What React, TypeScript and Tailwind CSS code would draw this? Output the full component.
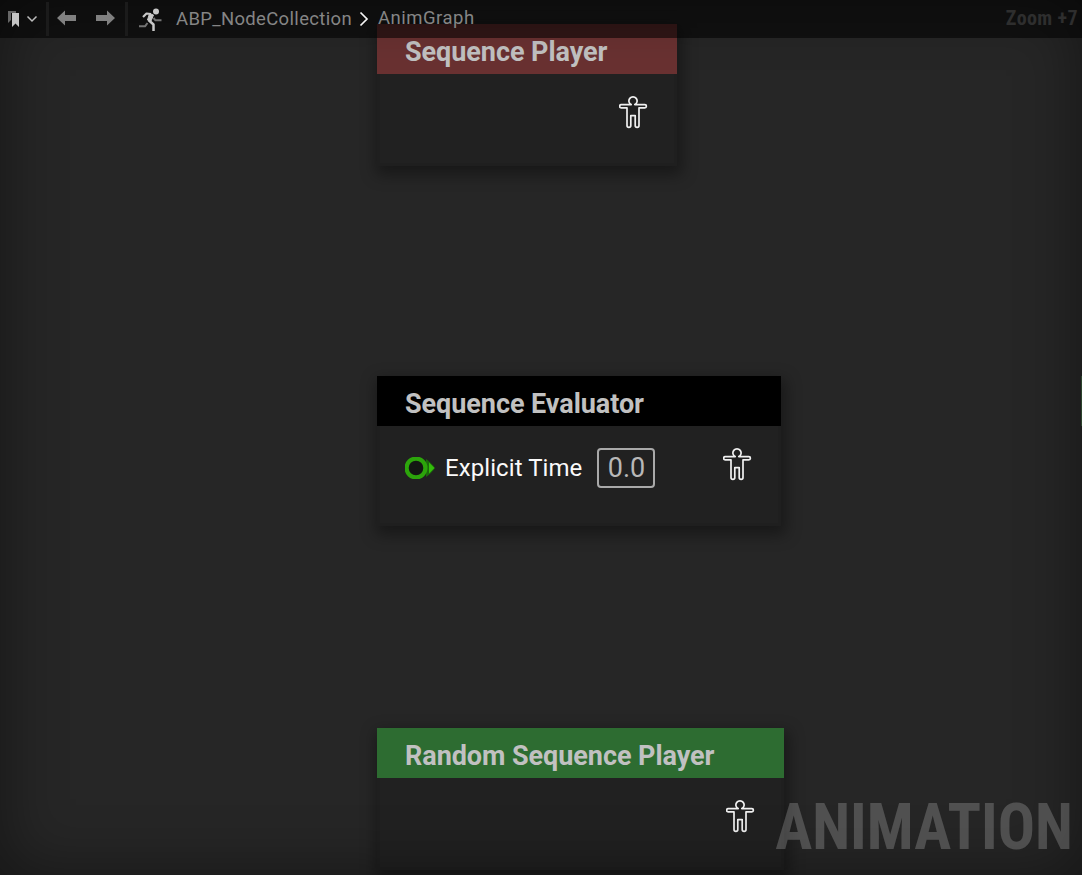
import type { ReactNode } from "react";

function PosePin() {
  return (
    <svg width="30" height="34" viewBox="0 0 30 34" fill="none" stroke="#f0f0f0" strokeWidth="1.7" strokeLinejoin="round">
      <path d="M12.200 9.600A4.100 4.100 0 1 1 15.800 9.600H25.800A1.600 1.600 0 0 1 25.800 12.800H20V30.500A1.500 1.500 0 0 1 16.200 30.500V20.600H11.800V30.500A1.500 1.500 0 0 1 8 30.500V12.800H2.200A1.600 1.600 0 0 1 2.200 9.600Z" />
    </svg>
  );
}

type NodeProps = {
  title: string;
  place: string;
  header: string;
  children?: ReactNode;
};

function GraphNode({ title, place, header, children }: NodeProps) {
  return (
    <section className={`absolute left-[377px] flex flex-col shadow-[2px_6px_14px_3px_rgba(0,0,0,0.36)] ${place}`}>
      <header className={`flex h-[50px] shrink-0 items-center pl-7 pt-1.5 ${header}`}>
        <h2 className="whitespace-nowrap text-[27px] font-bold leading-8 tracking-[-0.06px] text-[#c1c1c1]">{title}</h2>
      </header>
      <div className="flex flex-1 items-start justify-between border-x-[3px] border-b-[3px] border-[#1f1f1f] bg-[#212121] pl-[25px] pr-[25px] pt-[21px]">
        <div className="flex items-center pt-px">{children}</div>
        <PosePin />
      </div>
    </section>
  );
}

function Separator() {
  return <div className="h-[34px] w-[3px] shrink-0 bg-[#1b1b1b]" />;
}

function Toolbar() {
  return (
    <nav className="absolute inset-x-0 top-0 flex h-[38px] items-center bg-black/55">
      <div className="flex w-[46px] shrink-0 items-center pl-2">
        <svg width="12" height="18" viewBox="0 0 12 18">
          <path d="M0 1H8V3H3V10L0 13Z" fill="#666" />
          <path d="M4 3H11V17L7.500 13.500L4 17Z" fill="#c4c4c4" />
        </svg>
        <svg className="ml-[6px]" width="12" height="8" viewBox="0 0 12 8" fill="none" stroke="#bdbdbd" strokeWidth="1.500">
          <path d="M1.500 1.500L6 6L10.500 1.500" />
        </svg>
      </div>
      <Separator />
      <svg className="-mt-0.5 ml-2 shrink-0" width="19" height="16" viewBox="0 0 19 16" fill="#808080">
        <path d="M0 8L8 0.500V5H19V11H8V15.500Z" />
      </svg>
      <svg className="-mt-0.5 ml-5 shrink-0" width="19" height="16" viewBox="0 0 19 16" fill="#808080">
        <path d="M19 8L11 0.500V5H0V11H11V15.500Z" />
      </svg>
      <div className="ml-[10px] flex"><Separator /></div>
      <svg className="ml-[10px] shrink-0" width="24" height="24" viewBox="0 0 24 24" fill="none" strokeLinejoin="round">
        <path d="M1 19.300H7L9.500 16M15.500 11L17.500 13.300H23.500" stroke="#747474" strokeWidth="2" />
        <circle cx="18" cy="4.500" r="3" fill="#c8c8c8" />
        <path d="M5 10L8.500 6.500L13 7" stroke="#c8c8c8" strokeWidth="2.200" />
        <path d="M11.500 6.500L15.500 8L13 14L9.500 13Z" fill="#c8c8c8" stroke="#c8c8c8" strokeWidth="1" />
        <path d="M10.500 13L15.500 17.500V24" stroke="#c8c8c8" strokeWidth="2.500" />
      </svg>
      <span className="relative top-px ml-[14px] w-[176px] shrink-0 whitespace-nowrap text-[18.500px] tracking-[0.330px] text-[#858585]">ABP_NodeCollection</span>
      <svg className="ml-[7px] shrink-0" width="10" height="16" viewBox="0 0 10 16" fill="none" stroke="#f5f5f5" strokeWidth="1.700">
        <path d="M1.500 1.500L8 8L1.500 14.500" />
      </svg>
      <span className="ml-[9px] whitespace-nowrap text-[18.500px] tracking-[0.500px] text-[#858585]">AnimGraph</span>
      <span className="-mt-0.5 ml-auto whitespace-nowrap pr-1 font-['Roboto_Condensed','Roboto'] text-[20px] font-bold tracking-[0.400px] text-[#2e2e2e]">Zoom +7</span>
    </nav>
  );
}

export default function App() {
  return (
    <main className="relative h-[875px] w-[1082px] overflow-hidden bg-[#262626] font-['Roboto',sans-serif]">
      <GraphNode title="Sequence Player" place="top-6 h-[142px] w-[300px]" header="bg-[#693131]" />
      <GraphNode title="Sequence Evaluator" place="top-[376px] h-[150px] w-[404px]" header="bg-black">
        <svg width="30" height="22" viewBox="0 1 30 22">
          <path d="M21 3C24 5 28 9 30 12C28 15 24 19 21 21Z" fill="#1c6a0c" />
          <circle cx="11" cy="12" r="9.400" fill="#131713" stroke="#2ca50b" strokeWidth="4.200" />
          <path d="M24 6.500L29.500 12L24 17.500Z" fill="#34bd0b" />
        </svg>
        <span className="ml-[10px] w-[138px] whitespace-nowrap text-[24px] leading-10 tracking-[0.080px] text-[#fafafa]">Explicit Time</span>
        <span className="ml-[14px] flex h-10 w-[58px] items-center justify-center rounded-[4px] border-2 border-[#a9a9a9] pl-px text-[27px] text-[#b8b8b8]">0.0</span>
      </GraphNode>
      <GraphNode title="Random Sequence Player" place="top-[728px] h-[142px] w-[407px]" header="bg-[#2d6c31]" />
      <div className="absolute right-0 top-[376px] h-[50px] w-px bg-[#38563a]" />
      <div className="pointer-events-none absolute inset-0 shadow-[inset_0_0_60px_4px_rgba(0,0,0,0.4)]" />
      <p className="absolute bottom-[10px] right-[9px] origin-right scale-x-[0.951] whitespace-nowrap font-['Roboto_Condensed','Roboto'] text-[65px] font-bold leading-[76px] text-white/20">ANIMATION</p>
      <Toolbar />
    </main>
  );
}
